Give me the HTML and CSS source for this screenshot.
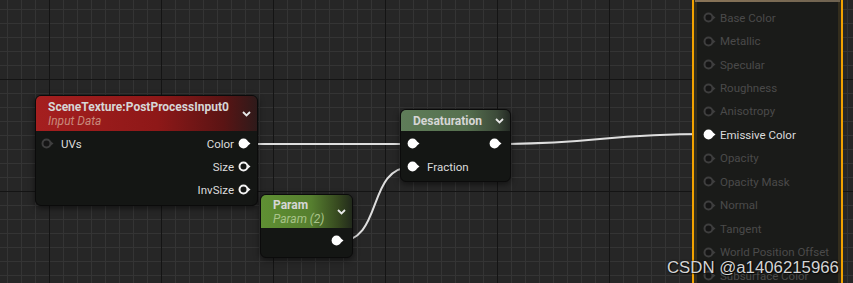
FILE: index.html
```html
<!DOCTYPE html>
<html lang="en">
<head>
    <meta charset="UTF-8">
    <title>Material Graph</title>
    <link rel="stylesheet" href="styles.css">
</head>
<body>
    <div class="graph">
        <svg class="wires" width="853" height="283" viewBox="0 0 853 283">
            <path d="M241 144 L412 144" />
            <path d="M494 144 C 600 144, 600 134, 707 134" />
            <path d="M337 242 C 385 242, 365 167, 412 167" />
        </svg>

        <div class="node scene-node">
            <div class="node-header red">
                <div class="titles">
                    <div class="title">SceneTexture:PostProcessInput0</div>
                    <div class="subtitle">Input Data</div>
                </div>
                <svg class="chevron" width="9" height="6" viewBox="0 0 9 6"><path d="M1 1 L4.5 4.5 L8 1" /></svg>
            </div>
            <div class="node-body">
                <div class="row split">
                    <div class="pin-label">
                        <svg class="pin dim" width="13" height="11" viewBox="0 0 13 11"><circle cx="5.5" cy="5.5" r="4" /><polygon points="10,3.6 12.5,5.5 10,7.4" /></svg>
                        <span>UVs</span>
                    </div>
                    <div class="pin-label out">
                        <span>Color</span>
                        <svg class="pin filled" width="13" height="11" viewBox="0 0 13 11"><circle cx="5.5" cy="5.5" r="4.9" /><polygon points="10,3.6 12.5,5.5 10,7.4" /></svg>
                    </div>
                </div>
                <div class="row out">
                    <span>Size</span>
                    <svg class="pin hollow" width="13" height="11" viewBox="0 0 13 11"><circle cx="5.5" cy="5.5" r="4" /><polygon points="10,3.6 12.5,5.5 10,7.4" /></svg>
                </div>
                <div class="row out">
                    <span>InvSize</span>
                    <svg class="pin hollow" width="13" height="11" viewBox="0 0 13 11"><circle cx="5.5" cy="5.5" r="4" /><polygon points="10,3.6 12.5,5.5 10,7.4" /></svg>
                </div>
            </div>
        </div>

        <div class="node desat-node">
            <div class="node-header sage">
                <div class="titles">
                    <div class="title">Desaturation</div>
                </div>
                <svg class="chevron" width="9" height="6" viewBox="0 0 9 6"><path d="M1 1 L4.5 4.5 L8 1" /></svg>
            </div>
            <div class="node-body">
                <div class="row split">
                    <svg class="pin filled" width="13" height="11" viewBox="0 0 13 11"><circle cx="5.5" cy="5.5" r="4.9" /><polygon points="10,3.6 12.5,5.5 10,7.4" /></svg>
                    <svg class="pin filled" width="13" height="11" viewBox="0 0 13 11"><circle cx="5.5" cy="5.5" r="4.9" /><polygon points="10,3.6 12.5,5.5 10,7.4" /></svg>
                </div>
                <div class="row">
                    <svg class="pin filled" width="13" height="11" viewBox="0 0 13 11"><circle cx="5.5" cy="5.5" r="4.9" /><polygon points="10,3.6 12.5,5.5 10,7.4" /></svg>
                    <span>Fraction</span>
                </div>
            </div>
        </div>

        <div class="node param-node">
            <div class="node-header green">
                <div class="titles">
                    <div class="title">Param</div>
                    <div class="subtitle">Param (2)</div>
                </div>
                <svg class="chevron" width="9" height="6" viewBox="0 0 9 6"><path d="M1 1 L4.5 4.5 L8 1" /></svg>
            </div>
            <div class="node-body">
                <div class="row out">
                    <svg class="pin filled" width="13" height="11" viewBox="0 0 13 11"><circle cx="5.5" cy="5.5" r="4.9" /><polygon points="10,3.6 12.5,5.5 10,7.4" /></svg>
                </div>
            </div>
        </div>

        <div class="node result-node">
            <div class="result-header"></div>
            <div class="result-body">
                <div class="row faded"><svg class="pin dim" width="13" height="11" viewBox="0 0 13 11"><circle cx="5.5" cy="5.5" r="4" /><polygon points="10,3.6 12.5,5.5 10,7.4" /></svg><span>Base Color</span></div>
                <div class="row faded"><svg class="pin dim" width="13" height="11" viewBox="0 0 13 11"><circle cx="5.5" cy="5.5" r="4" /><polygon points="10,3.6 12.5,5.5 10,7.4" /></svg><span>Metallic</span></div>
                <div class="row faded"><svg class="pin dim" width="13" height="11" viewBox="0 0 13 11"><circle cx="5.5" cy="5.5" r="4" /><polygon points="10,3.6 12.5,5.5 10,7.4" /></svg><span>Specular</span></div>
                <div class="row faded"><svg class="pin dim" width="13" height="11" viewBox="0 0 13 11"><circle cx="5.5" cy="5.5" r="4" /><polygon points="10,3.6 12.5,5.5 10,7.4" /></svg><span>Roughness</span></div>
                <div class="row faded"><svg class="pin dim" width="13" height="11" viewBox="0 0 13 11"><circle cx="5.5" cy="5.5" r="4" /><polygon points="10,3.6 12.5,5.5 10,7.4" /></svg><span>Anisotropy</span></div>
                <div class="row"><svg class="pin filled" width="13" height="11" viewBox="0 0 13 11"><circle cx="5.5" cy="5.5" r="4.9" /><polygon points="10,3.6 12.5,5.5 10,7.4" /></svg><span>Emissive Color</span></div>
                <div class="row faded"><svg class="pin dim" width="13" height="11" viewBox="0 0 13 11"><circle cx="5.5" cy="5.5" r="4" /><polygon points="10,3.6 12.5,5.5 10,7.4" /></svg><span>Opacity</span></div>
                <div class="row faded"><svg class="pin dim" width="13" height="11" viewBox="0 0 13 11"><circle cx="5.5" cy="5.5" r="4" /><polygon points="10,3.6 12.5,5.5 10,7.4" /></svg><span>Opacity Mask</span></div>
                <div class="row faded"><svg class="pin dim" width="13" height="11" viewBox="0 0 13 11"><circle cx="5.5" cy="5.5" r="4" /><polygon points="10,3.6 12.5,5.5 10,7.4" /></svg><span>Normal</span></div>
                <div class="row faded"><svg class="pin dim" width="13" height="11" viewBox="0 0 13 11"><circle cx="5.5" cy="5.5" r="4" /><polygon points="10,3.6 12.5,5.5 10,7.4" /></svg><span>Tangent</span></div>
                <div class="row faded"><svg class="pin dim" width="13" height="11" viewBox="0 0 13 11"><circle cx="5.5" cy="5.5" r="4" /><polygon points="10,3.6 12.5,5.5 10,7.4" /></svg><span>World Position Offset</span></div>
                <div class="row faded"><svg class="pin dim" width="13" height="11" viewBox="0 0 13 11"><circle cx="5.5" cy="5.5" r="4" /><polygon points="10,3.6 12.5,5.5 10,7.4" /></svg><span>Subsurface Color</span></div>
            </div>
        </div>

        <div class="watermark">CSDN @a1406215966</div>
    </div>
</body>
</html>
```

FILE: styles.css
```css
body {
    margin: 0;
    overflow: hidden;
    font-family: Roboto, "Liberation Sans", sans-serif;
}

.graph {
    position: relative;
    width: 853px;
    height: 283px;
    overflow: hidden;
    background-color: #262626;
    background-image:
        linear-gradient(to right, #141414 1px, transparent 1px),
        linear-gradient(to bottom, #141414 1px, transparent 1px),
        linear-gradient(to right, #343434 1px, transparent 1px),
        linear-gradient(to bottom, #343434 1px, transparent 1px);
    background-size: 112px 100%, 100% 112px, 14px 100%, 100% 14px;
    background-position: 49px 0, 0 79px, 7px 0, 0 9px;
}

.wires {
    position: absolute;
    left: 0;
    top: 0;
}

.wires path {
    fill: none;
    stroke: #dedede;
    stroke-width: 2;
}

.node {
    position: absolute;
    background: #141614;
    border: 1px solid #0b0b0b;
    border-radius: 6px;
    box-shadow: 0 2px 6px rgba(0,0,0,0.55);
    overflow: hidden;
    color: #dcdcdc;
    font-size: 11.5px;
}

.node-header {
    display: flex;
    align-items: center;
    justify-content: space-between;
    padding: 0 6px 0 12px;
    box-sizing: border-box;
}

.node-header.red {
    height: 35px;
    background: linear-gradient(to right, #a51f1f 0%, #8e1818 55%, #5a1414 85%, #2e1a1a 100%);
}

.node-header.sage {
    height: 21px;
    background: linear-gradient(to right, #5f7d59 0%, #56704f 60%, #3c4a39 88%, #242a24 100%);
}

.node-header.green {
    height: 33px;
    background: linear-gradient(to right, #5f9033 0%, #567f2f 55%, #36481f 85%, #222a1c 100%);
}

.title {
    font-weight: bold;
    font-size: 12px;
    line-height: 14px;
    color: #d6d6d6;
}

.subtitle {
    font-style: italic;
    font-size: 12px;
    line-height: 14px;
}

.red .subtitle {
    color: #c88a7c;
}

.green .subtitle {
    color: #a9c48a;
}

.chevron path {
    fill: none;
    stroke: #e8e8e8;
    stroke-width: 1.8;
}

.node-body {
    padding: 1px 6px 2px 5px;
}

.row {
    display: flex;
    align-items: center;
    gap: 7px;
    height: 23px;
}

.row.out {
    justify-content: flex-end;
    gap: 4px;
}

.row.split {
    justify-content: space-between;
}

.pin-label {
    display: flex;
    align-items: center;
    gap: 7px;
}

.pin-label.out {
    gap: 4px;
}

.pin {
    flex: none;
}

.pin.filled circle,
.pin.filled polygon {
    fill: #ffffff;
}

.pin.hollow circle {
    fill: none;
    stroke: #f2f2f2;
    stroke-width: 2;
}

.pin.hollow polygon {
    fill: #f2f2f2;
}

.pin.dim circle {
    fill: #151515;
    stroke: #3e3e3e;
    stroke-width: 2;
}

.pin.dim polygon {
    fill: #3e3e3e;
}

.scene-node {
    left: 35px;
    top: 95px;
    width: 221px;
    height: 109px;
}

.desat-node {
    left: 400px;
    top: 109px;
    width: 109px;
    height: 71px;
}

.desat-node .node-body {
    padding: 1px 8px 2px 6px;
}

.param-node {
    left: 260px;
    top: 194px;
    width: 91px;
    height: 62px;
}

.param-node .node-body {
    padding: 1px 8px 2px 6px;
}

.result-node {
    left: 692px;
    top: -30px;
    width: 147px;
    height: 340px;
    border: 2px solid #f2a200;
    border-radius: 4px;
    background: #1a1b19;
    box-shadow: inset 0 0 0 3px #332d1d;
}

.result-header {
    height: 30px;
    margin: 0 1px;
    background: linear-gradient(to right, #8a7558, #6e6250);
}

.result-body {
    padding: 4px 8px 0 9px;
}

.result-body .row {
    height: 23.45px;
    gap: 4px;
}

.row.faded span {
    color: #4a4a4a;
}

.watermark {
    position: absolute;
    left: 667px;
    top: 258px;
    font-family: "Liberation Sans", Arial, sans-serif;
    font-size: 16.8px;
    color: #d4d4d4;
    text-shadow: 0 0 2px rgba(0,0,0,0.8), 1px 1px 1px rgba(0,0,0,0.7);
}
```
